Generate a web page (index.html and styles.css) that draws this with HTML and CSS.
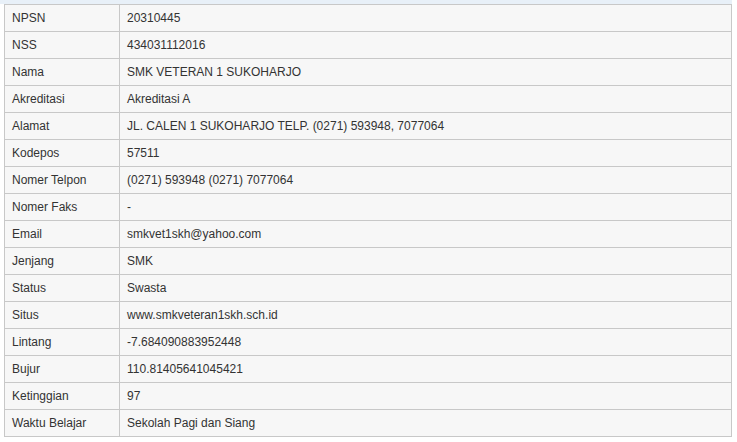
FILE: index.html
```html
<!DOCTYPE html>
<html lang="id">
<head>
<meta charset="utf-8">
<title>Profil Sekolah</title>
<link rel="stylesheet" href="styles.css">
</head>
<body>
<div class="page">
  <div class="strip"></div>
  <table class="info">
    <colgroup><col class="c-label"><col class="c-value"></colgroup>
    <tbody>
      <tr><td>NPSN</td><td>20310445</td></tr>
      <tr><td>NSS</td><td>434031112016</td></tr>
      <tr><td>Nama</td><td>SMK VETERAN 1 SUKOHARJO</td></tr>
      <tr><td>Akreditasi</td><td>Akreditasi A</td></tr>
      <tr><td>Alamat</td><td>JL. CALEN 1 SUKOHARJO TELP. (0271) 593948, 7077064</td></tr>
      <tr><td>Kodepos</td><td>57511</td></tr>
      <tr><td>Nomer Telpon</td><td>(0271) 593948 (0271) 7077064</td></tr>
      <tr><td>Nomer Faks</td><td>-</td></tr>
      <tr><td>Email</td><td>smkvet1skh@yahoo.com</td></tr>
      <tr><td>Jenjang</td><td>SMK</td></tr>
      <tr><td>Status</td><td>Swasta</td></tr>
      <tr><td>Situs</td><td>www.smkveteran1skh.sch.id</td></tr>
      <tr><td>Lintang</td><td>-7.684090883952448</td></tr>
      <tr><td>Bujur</td><td>110.81405641045421</td></tr>
      <tr><td>Ketinggian</td><td>97</td></tr>
      <tr><td>Waktu Belajar</td><td>Sekolah Pagi dan Siang</td></tr>
    </tbody>
  </table>
</div>
</body>
</html>
```

FILE: styles.css
```css
html, body {
  margin: 0;
  padding: 0;
  background: #ffffff;
}

.page {
  width: 732px;
}

.strip {
  height: 4px;
  background: #e8f0f8;
}

.info {
  margin-left: 4px;
  width: 728px;
  border-collapse: collapse;
  table-layout: fixed;
  font-family: "Liberation Sans", Arial, sans-serif;
  font-size: 12px;
  color: #333333;
}

.c-label {
  width: 115px;
}

.info td {
  height: 26px;
  padding: 0 7px;
  background: #f7f7f7;
  border: 1px solid #c8c8c8;
  vertical-align: middle;
  line-height: 14px;
  white-space: nowrap;
}
```
